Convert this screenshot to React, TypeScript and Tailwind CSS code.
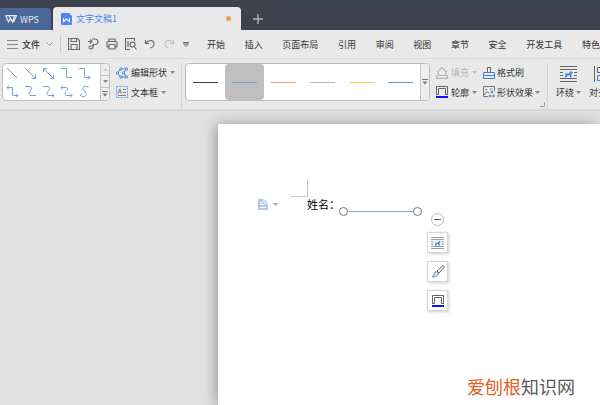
import React from 'react';

const menuItems = ['开始', '插入', '页面布局', '引用', '审阅', '视图', '章节', '安全', '开发工具', '特色'];

const connectors = [
  'M1 1L11 11',
  'M1 1L11 11M11.500 7.500V11.500H7.500',
  'M2 2L11 11M11.500 8V11.500H8M1.500 5V1.500H5',
  'M1 1.500H6.500V10.500H12',
  'M1 1.500H6.500V10.500H12M10 8.500L12 10.500L10 12.500',
  'M3 .5L1 2.500L3 4.500M1 2.500H6.500V10.500H12M10 8.500L12 10.500L10 12.500',
  'M1 1.500H6Q9 2 7 5L5.500 7Q4 10.500 7 10.500H12',
  'M1 1.500H6Q9 2 7 5L5.500 7Q4 10.500 7 10.500H12M10 8.500L12 10.500L10 12.500',
  'M3 .5L1 2.500L3 4.500M1 2.500H6Q9 3 7 5.500L5.500 7Q4 10.500 7 10.500H12M10 8.500L12 10.500L10 12.500',
  'M10.500 2Q7 -.5 5 2.500Q4 5 7 6.500Q9.500 8.500 7.500 11Q4.500 13 2.500 10.500Q2.500 8.500 4 9',
];

const lineStyles = [
  { name: '黑色', color: 'bg-[#3c3c3c]' },
  { name: '浅蓝', color: 'bg-[#6fa5d4]' },
  { name: '橙色', color: 'bg-[#eb9f6b]' },
  { name: '灰色', color: 'bg-[#b8b8b8]' },
  { name: '黄色', color: 'bg-[#f7cf4d]' },
  { name: '蓝色', color: 'bg-[#6e8fcf]' },
];

const Caret: React.FC<{ className?: string }> = ({ className = 'text-[#888]' }) => (
  <svg className={`h-[3px] w-[5px] shrink-0 ${className}`} viewBox="0 0 5 3" fill="currentColor">
    <path d="M0 0H5L2.500 3Z" />
  </svg>
);

const MoreCaret: React.FC = () => (
  <svg className="h-[6px] w-[6px] text-[#777]" viewBox="0 0 6 6" fill="currentColor">
    <path d="M0 0H6V1H0ZM.5 2.500H5.500L3 5.500Z" />
  </svg>
);

const WrapIcon: React.FC<{ className: string }> = ({ className }) => (
  <svg className={className} viewBox="0 0 17 16" fill="none">
    <path d="M0 .5H17M0 3.500H17M0 6.500H3M14 6.500H17M0 9.500H3M14 9.500H17M0 12.500H17M0 15.500H17" stroke="#666" />
    <path d="M4.500 6.500L6 7.500H9L10.500 5L13 6.500L11.500 8V11.500H10V9.500H7.500L6.500 11.500H5L5.500 8.500Z" fill="#3e8ddd" />
  </svg>
);

const OutlineIcon: React.FC<{ className: string }> = ({ className }) => (
  <svg className={className} viewBox="0 0 12 12" fill="none">
    <path d="M.5 9V.5H11.500V9M2.500 8.500V2.500H9.500V8.500M.5 8.500H2.500M9.500 8.500H11.500" stroke="#666" />
    <path d="M0 10H12V12H0Z" fill="#1010ff" />
  </svg>
);

const TitleBar: React.FC = () => (
  <header className="flex h-[30px] shrink-0 items-end bg-[#3e424e]">
    <button className="flex h-[22px] w-[51px] items-center gap-[3px] rounded-tr-sm bg-[#496798] pl-[5px] text-[9px] leading-none text-[#e8edf5]">
      <svg className="h-[8px] w-[12px]" viewBox="0 0 12 8" fill="none" stroke="currentColor" strokeWidth="1.200">
        <path d="M.5 .7H9.500L7.500 7L5.500 3L3.500 7L.8 .8M4 .8L7.500 7M9 .7H11.500L8.500 7" />
      </svg>
      WPS
    </button>
    <button className="ml-[2px] flex h-[23px] w-[188px] items-center rounded-t bg-[#e9e9e9] pr-[10px] pl-2 text-[9px] leading-none text-[#4f86ee]">
      <svg className="mr-1 h-[12px] w-[11px]" viewBox="0 0 11 12">
        <path d="M1 0H8L11 3V11Q11 12 10 12H1Q0 12 0 11V1Q0 0 1 0Z" fill="#4c88f5" />
        <path d="M2.500 5V8.500L5.500 6L8.500 8.500V5" fill="none" stroke="#fff" strokeWidth="1.100" />
      </svg>
      文字文稿1
      <span className="ml-auto h-[5px] w-[5px] rounded-full bg-[#eba05a]" />
    </button>
    <button className="ml-3 flex h-[23px] items-center" aria-label="新建">
      <svg className="h-[10px] w-[10px]" viewBox="0 0 10 10" stroke="#b5b7bd" strokeWidth="1.300">
        <path d="M5 0V10M0 5H10" />
      </svg>
    </button>
  </header>
);

const quickIcons = [
  {
    name: '保存',
    path: 'M.5 .5H9.500L11.500 2.500V11.500H.5ZM3 .5V3.500H8.500V.5M3 11.500V6.500H9V11.500',
    color: 'text-[#666]',
  },
  {
    name: '输出',
    path: 'M1 3.500H5M3 1.500L5 3.500L3 5.500M5 1H8Q11 1 11 4Q11 6.500 8 6.500H6V8.500Q6 11 4 11Q2 11 2 9.500Q2 8 4 8H7',
    color: 'text-[#666]',
  },
  {
    name: '打印',
    path: 'M3 3.500V1H9V3.500M3 9H1.500Q1 9 1 8.500V4.500Q1 3.500 2 3.500H10Q11 3.500 11 4.500V8.500Q11 9 10.500 9H9M3 6.500H9V11H3Z',
    color: 'text-[#666]',
  },
  {
    name: '打印预览',
    path: 'M5 11.500H.5V.5H9.500V3M10 6.500A2.500 2.500 0 1 1 5 6.500A2.500 2.500 0 1 1 10 6.500M9.200 8.500L11.500 11.500M3 3V9',
    color: 'text-[#666]',
  },
  { name: '撤销', path: 'M1.500 2V5.500H5M1.500 5.500Q4 2 7.500 2.500Q10 3 10 6Q10 9 6.500 10', color: 'text-[#666]' },
  { name: '恢复', path: 'M10.500 2V5.500H7M10.500 5.500Q8 2 4.500 2.500Q2 3 2 6Q2 9 5.500 10', color: 'text-[#bbb]' },
];

const MenuBar: React.FC = () => (
  <nav className="flex h-[29px] shrink-0 items-center border-b border-[#dcdcdc] bg-[#e9e9e9] text-[9px] leading-none whitespace-nowrap text-[#333]">
    <button className="ml-[7px] flex shrink-0 items-center gap-1">
      <svg className="h-[9px] w-[11px]" viewBox="0 0 11 9" stroke="#888">
        <path d="M0 .5H11M0 4.500H11M0 8.500H11" />
      </svg>
      <span className="font-medium">文件</span>
      <svg className="ml-[2px] h-[4px] w-[7px]" viewBox="0 0 7 4" fill="none" stroke="#999">
        <path d="M.5 .5L3.500 3.500L6.500 .5" />
      </svg>
    </button>
    <span className="mx-[7px] h-[18px] w-px shrink-0 bg-[#cacaca]" />
    <div className="flex shrink-0 items-center gap-[7px]">
      {quickIcons.map((icon) => (
        <button key={icon.name} aria-label={icon.name} className={icon.color}>
          <svg className="h-[12px] w-[12px]" viewBox="0 0 12 12" fill="none" stroke="currentColor" strokeWidth="1.100">
            <path d={icon.path} />
          </svg>
        </button>
      ))}
      <button aria-label="自定义快速访问工具栏">
        <svg className="h-[5px] w-[8px]" viewBox="0 0 8 5" fill="none" stroke="#666">
          <path d="M1 .5H7M1.500 2H6.500L4 4.500Z" />
        </svg>
      </button>
    </div>
    <div className="ml-[17px] flex max-w-[400px] flex-1 justify-between">
      {menuItems.map((item) => (
        <button key={item}>{item}</button>
      ))}
    </div>
  </nav>
);

const Ribbon: React.FC = () => (
  <section className="flex h-[52px] shrink-0 items-start border-b-2 border-[#d8d8d8] bg-[#e9e9e9] pt-1 text-[9px] leading-none whitespace-nowrap text-[#333]">
    {/* shape gallery */}
    <div className="ml-[2px] flex h-[38px] w-[108px] shrink-0 overflow-hidden rounded-sm border border-[#bdbdbd] bg-white">
      <div className="grid flex-1 grid-cols-5 items-center justify-items-center pr-[7px]">
        {connectors.map((d, i) => (
          <button key={i} aria-label={`线条 ${i + 1}`}>
            <svg className="h-[13px] w-[13px]" viewBox="0 0 13 13" fill="none" stroke="#7f9dd8">
              <path d={d} />
            </svg>
          </button>
        ))}
      </div>
      <div className="grid w-[9px] grid-rows-3 divide-y divide-[#c6c6c6] border-l border-[#c6c6c6] bg-[#eee]">
        <button className="flex items-center justify-center" aria-label="上一行">
          <Caret className="rotate-180 text-[#c4c4c4]" />
        </button>
        <button className="flex items-center justify-center" aria-label="下一行">
          <Caret />
        </button>
        <button className="flex items-center justify-center" aria-label="更多形状">
          <MoreCaret />
        </button>
      </div>
    </div>

    <div className="ml-[6px] flex w-[60px] shrink-0 flex-col">
      <button className="flex h-[19px] items-center gap-[3px]">
        <svg className="h-[12px] w-[12px] shrink-0" viewBox="0 0 12 12" fill="none" stroke="#3e84cf">
          <path d="M1.500 6L4.500 2H10.500L7.500 6L10.500 10H4.500Z" />
          <path
            d="M.5 5H2.500V7H.5ZM4 1H6V3H4ZM4 9H6V11H4ZM9.500 1H11.500V3H9.500ZM9.500 9H11.500V11H9.500ZM6.500 5H8.500V7H6.500Z"
            fill="#e9e9e9"
            strokeWidth=".8"
          />
        </svg>
        编辑形状
        <Caret />
      </button>
      <button className="flex h-[20px] items-center gap-[3px]">
        <svg className="h-[12px] w-[12px] shrink-0" viewBox="0 0 12 12" fill="none">
          <path d="M.5 .5H11.500V11.500H.5Z" stroke="#6b9ee0" strokeDasharray="2 1" />
          <path d="M2 7.500L3.800 3L5.600 7.500M2.600 6H5M7 3.500H10M7 6.500H10M2 9.500H10" stroke="#777" strokeWidth=".9" />
        </svg>
        文本框
        <Caret />
      </button>
    </div>

    <span className="ml-[5px] h-[46px] w-px shrink-0 bg-[#d4d4d4]" />

    {/* line styles */}
    <div className="ml-[3px] flex h-[38px] w-[245px] shrink-0 overflow-hidden rounded-sm border border-[#bdbdbd] bg-white">
      <div className="grid flex-1 grid-cols-6">
        {lineStyles.map((line, i) => (
          <button
            key={line.name}
            aria-label={line.name}
            className={`flex items-center justify-center rounded-sm ${i === 1 ? 'bg-[#bfbfbf]' : ''}`}
          >
            <span className={`h-px w-[25px] ${line.color}`} />
          </button>
        ))}
      </div>
      <button className="flex w-[9px] items-center justify-center border-l border-[#c6c6c6] bg-[#eee]" aria-label="更多样式">
        <MoreCaret />
      </button>
    </div>

    <div className="ml-[6px] grid shrink-0 grid-cols-[47px_auto]">
      <button className="flex h-[19px] items-center gap-[3px] text-[#b5b5b5]">
        <svg className="h-[12px] w-[12px] shrink-0" viewBox="0 0 12 12" fill="none" stroke="currentColor" strokeWidth="1.100">
          <path d="M6 .7L10.500 5L9 8.500H3L1.500 5ZM3 8.500H.6V11.400H11.400V8.500H9" />
        </svg>
        填充
        <Caret className="text-[#bbb]" />
      </button>
      <button className="flex h-[19px] items-center gap-[2px]">
        <svg className="h-[12px] w-[12px] shrink-0" viewBox="0 0 12 12" fill="none">
          <path d="M4.500 5.500V.5H7.500V5.500" stroke="#666" />
          <path d="M.5 5.500H11.500V11.500H.5ZM.5 8.500H11.500" stroke="#3e84cf" />
        </svg>
        格式刷
      </button>
      <button className="flex h-[20px] items-center gap-[3px]">
        <OutlineIcon className="h-[12px] w-[12px] shrink-0" />
        轮廓
        <Caret />
      </button>
      <button className="flex h-[20px] items-center gap-[2px]">
        <svg className="h-[12px] w-[12px] shrink-0" viewBox="0 0 12 12" fill="none">
          <path d="M5 10.500H.5V.5H11.500V5M1 9L4 5.500L6 7.500M2.500 3.500H4M7 3.500L9 2.500" stroke="#777" />
          <path d="M9 4.500L10.500 6L9 7.500L7.500 6ZM7 8.500L8.500 10L7 11.500L5.500 10ZM10.500 8.500L12 10L10.500 11.500L9 10Z" fill="#3e84cf" />
        </svg>
        形状效果
        <Caret />
      </button>
    </div>

    <button className="mt-[39px] shrink-0" aria-label="形状格式设置">
      <svg className="h-[5px] w-[5px]" viewBox="0 0 5 5" fill="none" stroke="#999">
        <path d="M4.500 0V4.500H0" />
      </svg>
    </button>
    <span className="ml-[2px] h-[46px] w-px shrink-0 bg-[#d4d4d4]" />

    <div className="ml-2 flex gap-2">
      <button className="flex shrink-0 flex-col items-center gap-[6px] pt-[3px]">
        <WrapIcon className="h-[16px] w-[17px]" />
        <span className="flex items-center gap-[2px]">
          环绕
          <Caret />
        </span>
      </button>
      <button className="flex shrink-0 flex-col items-center gap-[6px] pt-[3px]">
        <svg className="h-[16px] w-[16px]" viewBox="0 0 16 16" fill="none">
          <path d="M.5 0V16M3.500 1.500H11.500V6.500H3.500Z" stroke="#666" />
          <path d="M3.500 9.500H15.500V14.500H3.500Z" fill="#d6e8fa" stroke="#3e8ddd" />
        </svg>
        <span className="flex items-center gap-[2px]">
          对齐
          <Caret />
        </span>
      </button>
    </div>
  </section>
);

const floatButton =
  'flex h-[21px] w-[21px] items-center justify-center border border-[#d6d6d6] bg-white shadow-[1px_1px_3px_rgba(0,0,0,0.2)]';

const Page: React.FC = () => (
  <article className="relative flex-1 overflow-hidden bg-white pt-[55px] shadow-[-3px_0_12px_rgba(0,0,0,0.3)]">
    <div className="ml-[72px] h-[18px] w-[18px] border-r border-b border-[#c8c8c8]" />
    <div className="ml-10 flex h-[14px] items-center">
      <button className="flex w-[49px] items-center gap-[5px]" aria-label="段落布局">
        <svg className="h-[11px] w-[10px]" viewBox="0 0 10 11">
          <path d="M0 0H6L10 4V11H0Z" fill="#b3c8ea" />
          <path d="M6 0V4H10M2 3.500H4M2 5.500H6M2 8.500H8" fill="none" stroke="#fff" />
        </svg>
        <Caret className="text-[#aaa]" />
      </button>
      <p className="text-[11px] leading-[14px] text-black">姓名：</p>
    </div>

    {/* selected line with its two handles */}
    <div className="absolute top-[83px] left-[121px] flex items-center">
      <span className="h-[9px] w-[9px] rounded-full border border-[#777] bg-white" />
      <span className="h-px w-[65px] bg-[#85b1ea]" />
      <span className="h-[9px] w-[9px] rounded-full border border-[#777] bg-white" />
    </div>

    <div className="absolute top-[89px] left-[209px] flex flex-col items-center gap-2">
      <button className="mb-[-2px] flex h-[13px] w-[13px] items-center justify-center rounded-full border border-[#bbb] bg-white" aria-label="收起">
        <span className="h-px w-[7px] bg-[#555]" />
      </button>
      <button className={floatButton} aria-label="环绕方式">
        <WrapIcon className="h-[12px] w-[13px]" />
      </button>
      <button className={floatButton} aria-label="形状样式">
        <svg className="h-[13px] w-[14px]" viewBox="0 0 14 13" fill="none" strokeLinejoin="round">
          <path d="M6 6L11.500 .8Q13.300 .5 13.200 2.200L8 8Z" stroke="#666" />
          <path d="M5.500 6.500L7.500 8.500Q7 12 .8 12Q3 11 3 9Q3.500 6.500 5.500 6.500Z" fill="#c9def6" stroke="#5f97d6" />
        </svg>
      </button>
      <button className={floatButton} aria-label="轮廓颜色">
        <OutlineIcon className="h-[12px] w-[12px]" />
      </button>
    </div>

    <p className="absolute right-[25px] bottom-[9px] text-[18px] leading-[20px] text-[#595959]">
      <span className="text-[#e2601f]">爱刨根</span>知识网
    </p>
  </article>
);

const App: React.FC = () => (
  <div className="flex h-screen flex-col overflow-hidden bg-[#e1e1e1] font-['Noto_Sans_CJK_SC',sans-serif]">
    <TitleBar />
    <MenuBar />
    <Ribbon />
    <main className="flex min-h-0 flex-1 overflow-hidden pt-[13px] pl-[218px]">
      <Page />
    </main>
  </div>
);

export default App;
